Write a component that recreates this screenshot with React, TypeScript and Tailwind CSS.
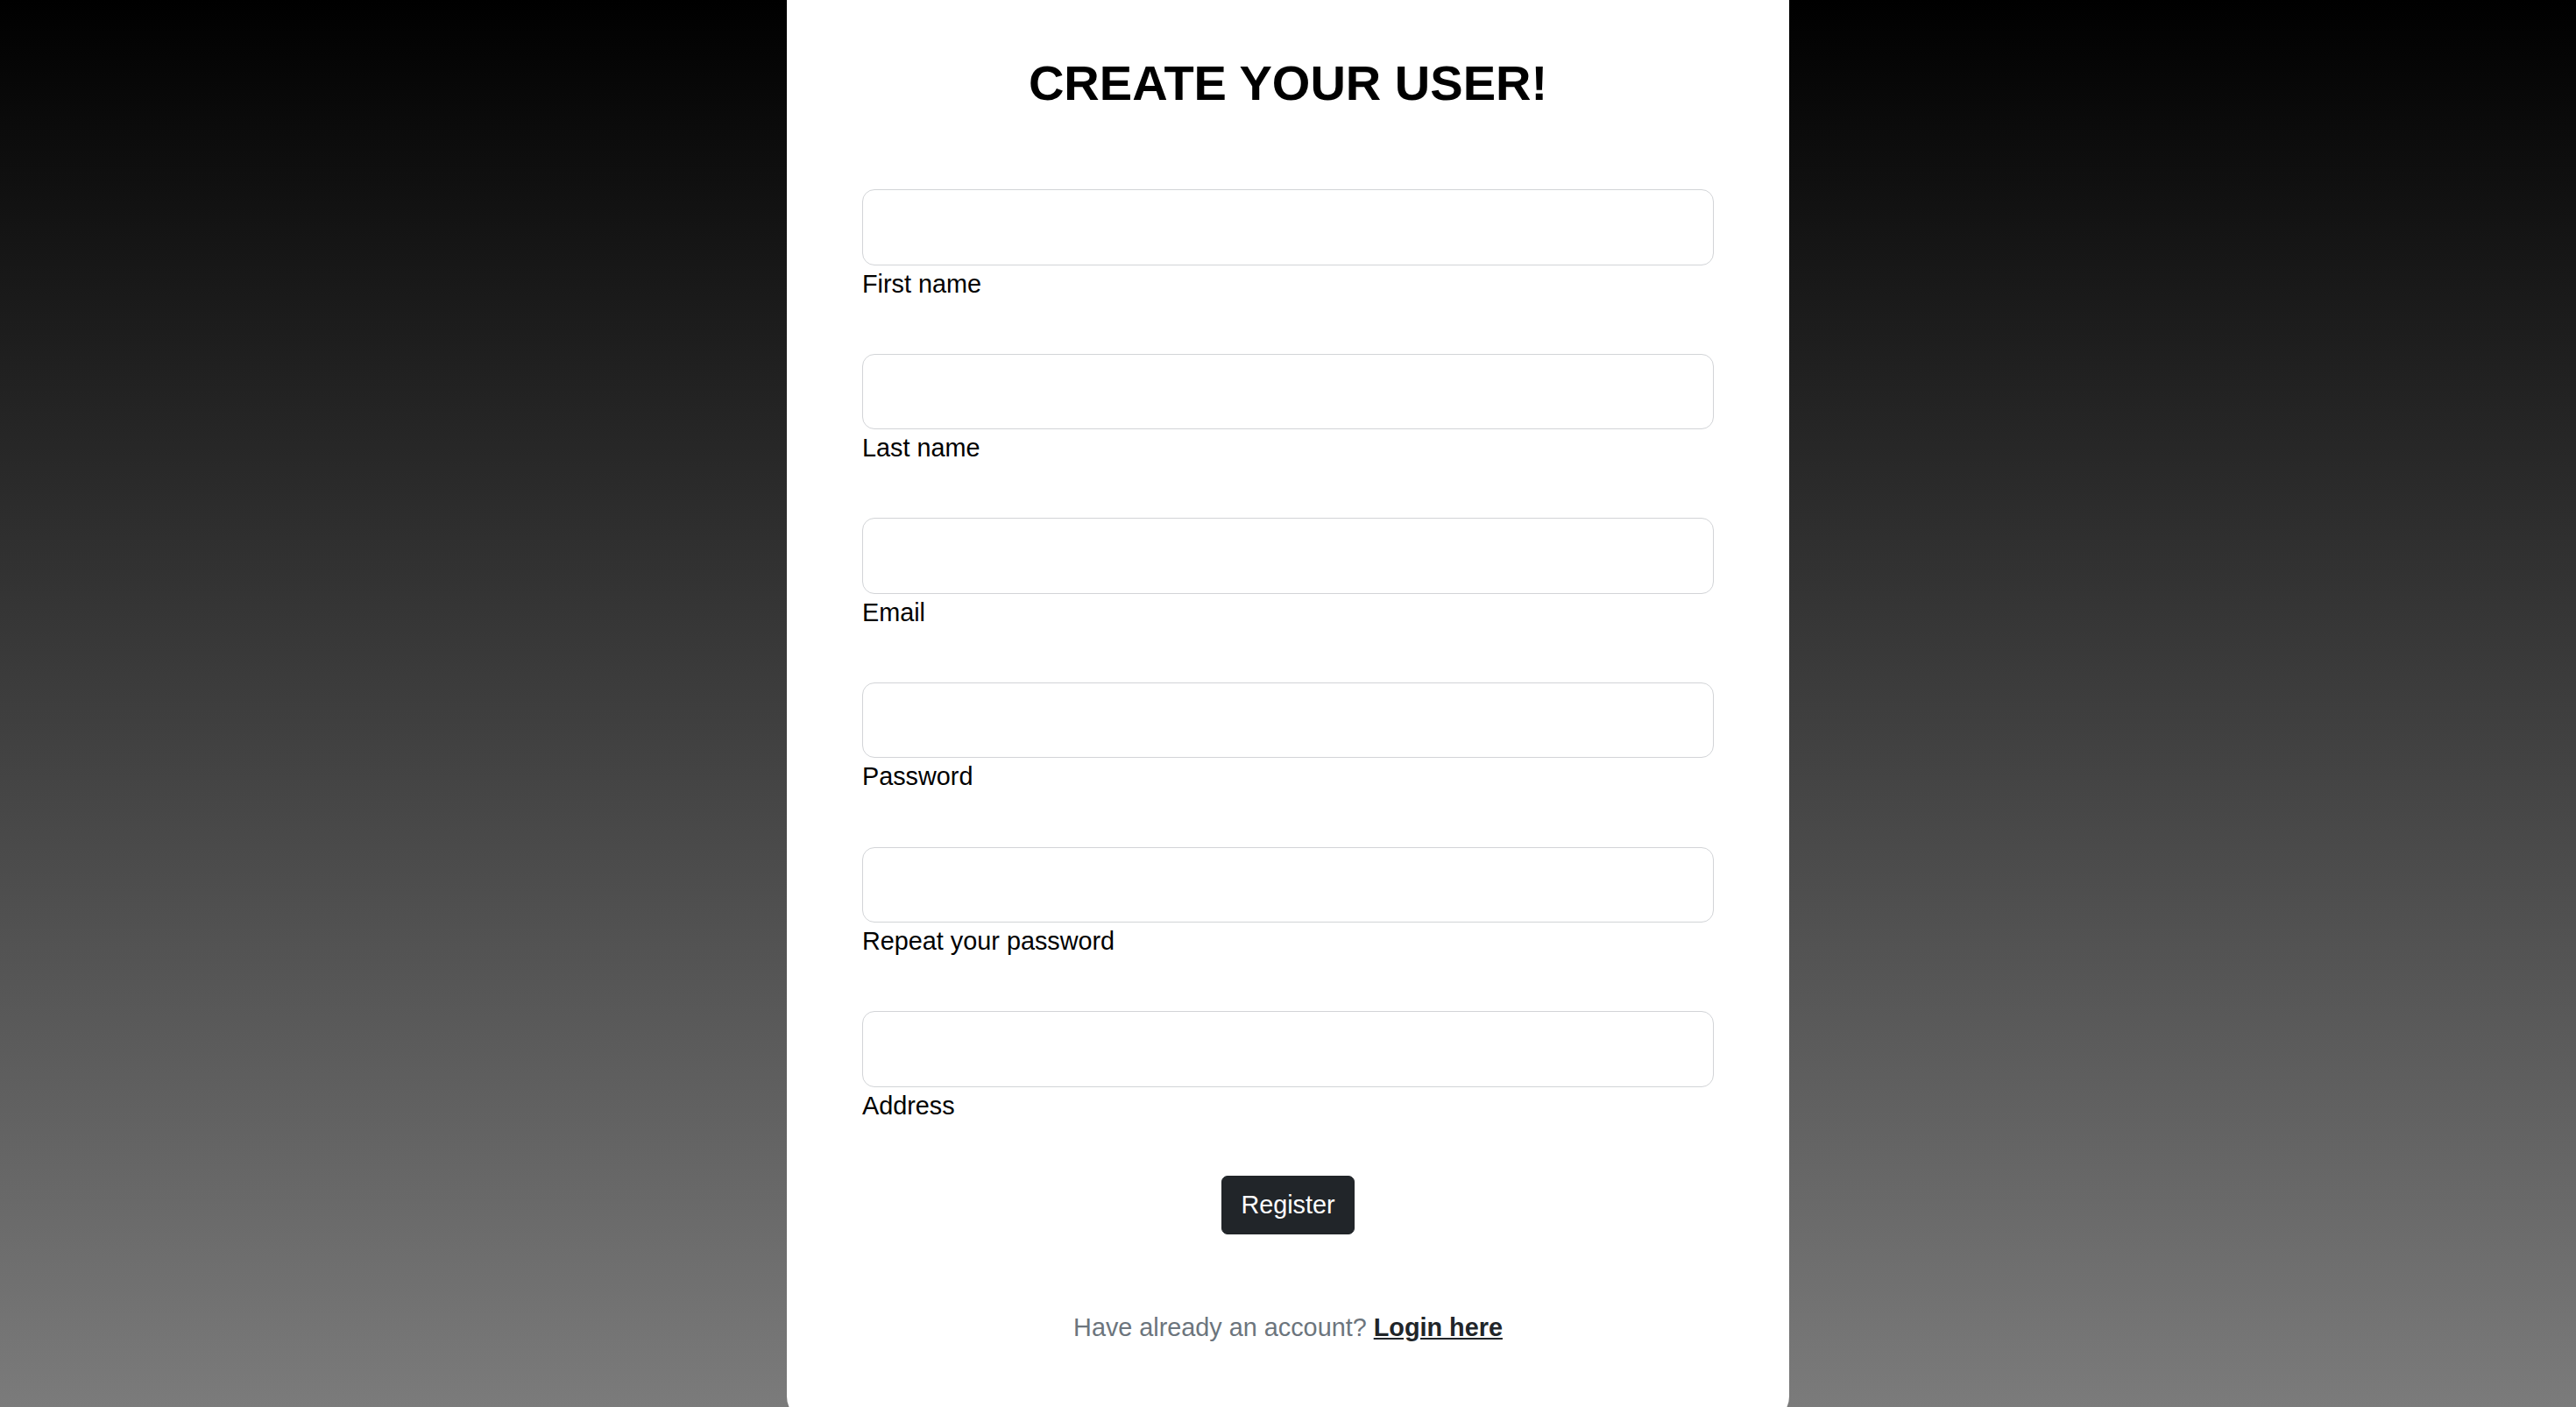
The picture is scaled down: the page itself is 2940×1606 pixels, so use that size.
import React from 'react';

const fields = ['First name', 'Last name', 'Email', 'Password', 'Repeat your password', 'Address'];

export default function App() {
  return (
    <div
      className="h-[1606px] overflow-hidden bg-[linear-gradient(to_bottom,#000000,#7b7b7b)] flex justify-center"
      style={{ fontFamily: '"Liberation Sans", Arial, Helvetica, sans-serif' }}
    >
      <div className="w-[1144px] shrink-0 self-start bg-white rounded-b-[29px] px-[86px] pt-[61px] pb-[86px]">
        <h2 className="text-center text-[56px] leading-[1.2] font-bold text-black mb-[88px]">CREATE YOUR USER!</h2>

        <form onSubmit={e => e.preventDefault()}>
          {fields.map(label => (
            <div key={label} className="mb-[58px]">
              <input
                type={label.toLowerCase().includes('password') ? 'password' : 'text'}
                className="block w-full h-[86.4px] border border-[#d2d4d7] rounded-[14px] bg-white px-[29px] text-[36px] outline-none"
              />
              <label className="block text-[28.8px] leading-[43.2px] text-black">{label}</label>
            </div>
          ))}

          <div className="flex justify-center">
            <button
              type="submit"
              className="bg-[#212529] border border-[#212529] text-white text-[28.8px] leading-[43.2px] px-[21.6px] py-[10.8px] rounded-[7px]"
            >
              Register
            </button>
          </div>

          <p className="text-center text-[#6c757d] text-[28.8px] leading-[43.2px] mt-[85px]">
            Have already an account?{' '}
            <a href="#" className="font-bold text-[#212529] underline">
              Login here
            </a>
          </p>
        </form>
      </div>
    </div>
  );
}
